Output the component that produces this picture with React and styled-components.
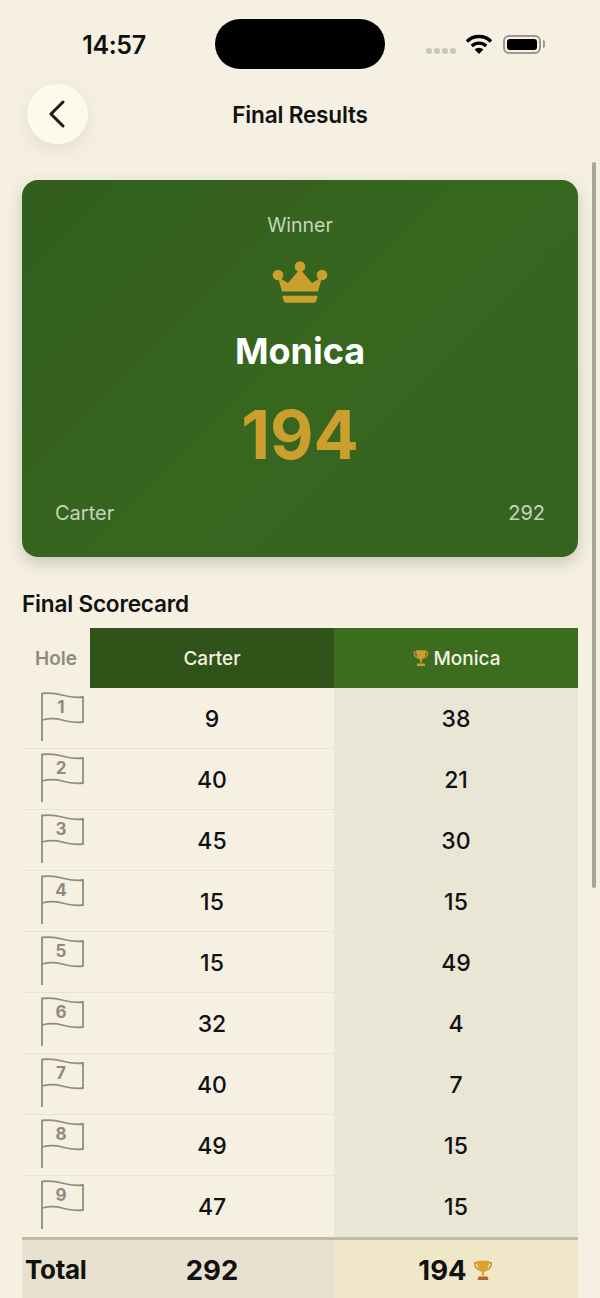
import React from "react";
import styled, { createGlobalStyle } from "styled-components";

const GlobalStyle = createGlobalStyle`
	html, body {
		margin: 0;
		padding: 0;
		background: #f5f0e1;
	}
	* {
		box-sizing: border-box;
	}
`;

const Page = styled.div`
	position: relative;
	width: 600px;
	height: 1298px;
	overflow: hidden;
	background: #f5f0e1;
	color: #111;
	font-family: Inter, "Liberation Sans", sans-serif;
`;

const StatusBar = styled.div`
	height: 84px;
	padding-top: 19px;
	display: grid;
	grid-template-columns: 215px 170px 215px;
	align-items: start;
`;

const Time = styled.div`
	height: 50px;
	line-height: 52px;
	text-align: center;
	padding-left: 13px;
	font-size: 25px;
	font-weight: 600;
	letter-spacing: -0.4px;
`;

const Island = styled.div`
	height: 50px;
	border-radius: 25px;
	background: #000;
`;

const StatusIcons = styled.div`
	display: flex;
	align-items: center;
	height: 50px;
	padding-left: 41px;
`;

const Dots = styled.div`
	display: flex;
	gap: 2px;
	margin-top: 13px;
	margin-right: 9px;
`;

const Dot = styled.span`
	width: 6px;
	height: 6px;
	border-radius: 50%;
	background: #c9c6bb;
`;

const Battery = styled.div`
	position: relative;
	margin-left: 10px;
	width: 38px;
	height: 19px;
	padding: 2px;
	border: 2px solid #9b988c;
	border-radius: 6px;
	&::before {
		content: "";
		display: block;
		height: 100%;
		border-radius: 3px;
		background: #000;
	}
	&::after {
		content: "";
		position: absolute;
		right: -6px;
		top: 3.5px;
		width: 2.5px;
		height: 8px;
		border-radius: 0 2px 2px 0;
		background: #9b988c;
	}
`;

const NavBar = styled.div`
	height: 60px;
	padding-left: 27px;
	display: grid;
	grid-template-columns: 60px 1fr 87px;
	align-items: center;
`;

const BackButton = styled.button`
	width: 61px;
	height: 60px;
	padding: 0 2px 0 0;
	border: none;
	border-radius: 50%;
	background: #fdfaea;
	box-shadow: 0 6px 18px rgba(90, 80, 50, 0.1);
	display: flex;
	align-items: center;
	justify-content: center;
`;

const NavTitle = styled.div`
	text-align: center;
	font-size: 22.6px;
	font-weight: 600;
	letter-spacing: -0.2px;
`;

const Content = styled.div`
	padding: 36px 22px 0;
`;

const WinnerCard = styled.div`
	height: 377px;
	border-radius: 16px;
	padding-top: 32px;
	background: linear-gradient(135deg, #315e1d 0%, #37661f 50%, #356420 100%);
	box-shadow: 0 6px 16px rgba(60, 60, 30, 0.22);
	display: flex;
	flex-direction: column;
	align-items: center;
	color: #fff;
`;

const WinnerLabel = styled.div`
	height: 26px;
	line-height: 26px;
	font-size: 19.5px;
	color: #c6d5b8;
`;

const CrownWrap = styled.div`
	height: 44px;
	margin-top: 23px;
`;

const WinnerName = styled.div`
	margin-top: 23px;
	height: 46px;
	line-height: 46px;
	font-size: 36px;
	font-weight: 700;
`;

const WinnerScore = styled.div`
	margin-top: 25px;
	height: 72px;
	line-height: 72px;
	font-size: 67px;
	font-weight: 700;
	color: #cb9f2e;
`;

const LoserRow = styled.div`
	align-self: stretch;
	margin-top: 29px;
	padding: 0 33px;
	display: flex;
	justify-content: space-between;
	font-size: 20px;
	line-height: 26px;
	color: #c6d5b8;
`;

const SectionTitle = styled.h2`
	margin: 33px 0 10px;
	height: 28px;
	line-height: 28px;
	font-size: 22.6px;
	font-weight: 600;
	letter-spacing: -0.2px;
`;

const Row = styled.div`
	display: grid;
	grid-template-columns: 68px 244px 244px;
`;

const HoleHead = styled.div`
	height: 60px;
	display: flex;
	align-items: center;
	justify-content: center;
	font-size: 19px;
	font-weight: 600;
	color: #8d8b80;
`;

const PlayerHead = styled.div`
	height: 60px;
	display: flex;
	align-items: center;
	justify-content: center;
	gap: 4px;
	font-size: 19px;
	font-weight: 500;
	color: #f4f2e2;
	background: ${(p) => (p.$winner ? "#3c6d1f" : "#2f5318")};
`;

const FlagCell = styled.div`
	position: relative;
	height: 61px;
	padding: 4px 0 0 18px;
	box-shadow: ${(p) => (p.$last ? "none" : "inset 0 -1px 0 #e6e2d4")};
`;

const FlagNumber = styled.span`
	position: absolute;
	left: 30px;
	top: 8px;
	width: 18px;
	text-align: center;
	font-size: 17px;
	line-height: 22px;
	font-weight: 700;
	color: #8d8b80;
`;

const ScoreCell = styled.div`
	height: 61px;
	display: flex;
	align-items: center;
	justify-content: center;
	font-size: 23px;
	font-weight: 500;
	background: ${(p) => (p.$winner ? "#e9e6d6" : "transparent")};
	box-shadow: ${(p) => (!p.$winner && !p.$last ? "inset 0 -1px 0 #e6e2d4" : "none")};
`;

const TotalRow = styled(Row)`
	border-top: 3px solid #bdbca0;
	height: 62px;
`;

const TotalLabel = styled.div`
	display: flex;
	align-items: center;
	padding-left: 3px;
	font-size: 26px;
	font-weight: 700;
	letter-spacing: -0.3px;
	background: #e8e1cf;
`;

const TotalScore = styled.div`
	display: flex;
	align-items: center;
	justify-content: center;
	gap: 5px;
	font-size: 27.5px;
	font-weight: 700;
	background: ${(p) => (p.$winner ? "#efe7c8" : "#e8e1cf")};
`;

const ScrollThumb = styled.div`
	position: absolute;
	left: 592px;
	top: 162px;
	width: 4px;
	height: 726px;
	border-radius: 2px;
	background: #a8a59a;
`;

const Wifi = () => (
	<svg width="28" height="22" viewBox="0 0 28 22">
		<path d="M2 8.5a17 17 0 0 1 24 0" fill="none" stroke="#000" strokeWidth="3.4" />
		<path d="M6.8 13a10.4 10.4 0 0 1 14.4 0" fill="none" stroke="#000" strokeWidth="3.4" />
		<path d="M9.6 16.6a6.2 6.2 0 0 1 8.8 0L14 21z" fill="#000" />
	</svg>
);

const Chevron = () => (
	<svg width="18" height="28" viewBox="0 0 18 28">
		<path d="M15 2 3 14l12 12" fill="none" stroke="#1d1b12" strokeWidth="3" strokeLinecap="round" strokeLinejoin="round" />
	</svg>
);

const Crown = () => (
	<svg width="56" height="42" viewBox="0 0 56 42">
		<g fill="#cb9f2e">
			<circle cx="28" cy="5.500" r="5.300" />
			<circle cx="6" cy="14" r="5.300" />
			<circle cx="50" cy="14" r="5.300" />
			<path d="M28 8 40 22 50 16 46 30.500H10L6 16 16 22z" />
			<path d="M10.300 34.700h35.400l-1.300 5a3 3 0 0 1-2.800 2H14.400a3 3 0 0 1-2.800-2z" />
		</g>
	</svg>
);

const Flag = () => (
	<svg width="46" height="50" viewBox="0 0 46 50">
		<path
			d="M2 49V1.500C10 0.500 15 1 22 3S34 6 43 5V30C34 31 29 30 22 28S10 26 2 28"
			fill="none"
			stroke="#8f8d80"
			strokeWidth="1.800"
		/>
	</svg>
);

const Trophy = ({ size, dark }) => (
	<svg width={size} height={size} viewBox="0 0 20 20">
		<path d="M5 3.500H2.500C2.500 7.500 4.500 9.500 7 10M15 3.500h2.500C17.500 7.500 15.500 9.500 13 10" fill="none" stroke="#c9952a" strokeWidth="1.400" />
		<path d="M4.500 1.500h11C15.500 7.500 13.500 11 11 12v3H9v-3C6.500 11 4.500 7.500 4.500 1.500z" fill={dark ? "#dca32c" : "#cb9f2e"} />
		<path d="M6 16h8l1 3H5z" fill={dark ? "#b5652a" : "#cb9f2e"} />
	</svg>
);

const holes = [
	[9, 38],
	[40, 21],
	[45, 30],
	[15, 15],
	[15, 49],
	[32, 4],
	[40, 7],
	[49, 15],
	[47, 15],
];

const App = () => {
	return (
		<Page>
			<GlobalStyle />
			<StatusBar>
				<Time>14:57</Time>
				<Island />
				<StatusIcons>
					<Dots>
						<Dot />
						<Dot />
						<Dot />
						<Dot />
					</Dots>
					<Wifi />
					<Battery />
				</StatusIcons>
			</StatusBar>
			<NavBar>
				<BackButton>
					<Chevron />
				</BackButton>
				<NavTitle>Final Results</NavTitle>
			</NavBar>
			<Content>
				<WinnerCard>
					<WinnerLabel>Winner</WinnerLabel>
					<CrownWrap>
						<Crown />
					</CrownWrap>
					<WinnerName>Monica</WinnerName>
					<WinnerScore>194</WinnerScore>
					<LoserRow>
						<span>Carter</span>
						<span>292</span>
					</LoserRow>
				</WinnerCard>
				<SectionTitle>Final Scorecard</SectionTitle>
				<Row>
					<HoleHead>Hole</HoleHead>
					<PlayerHead>Carter</PlayerHead>
					<PlayerHead $winner>
						<Trophy size={18} />
						Monica
					</PlayerHead>
				</Row>
				{holes.map(([carter, monica], i) => (
					<Row key={i}>
						<FlagCell $last={i === holes.length - 1}>
							<Flag />
							<FlagNumber>{i + 1}</FlagNumber>
						</FlagCell>
						<ScoreCell $last={i === holes.length - 1}>{carter}</ScoreCell>
						<ScoreCell $winner>{monica}</ScoreCell>
					</Row>
				))}
				<TotalRow>
					<TotalLabel>Total</TotalLabel>
					<TotalScore>292</TotalScore>
					<TotalScore $winner>
						194
						<Trophy size={22} dark />
					</TotalScore>
				</TotalRow>
			</Content>
			<ScrollThumb />
		</Page>
	);
};

export default App;
